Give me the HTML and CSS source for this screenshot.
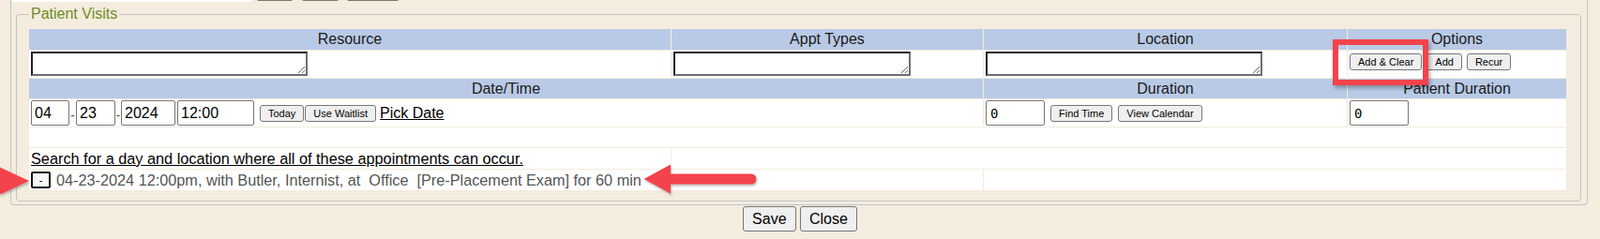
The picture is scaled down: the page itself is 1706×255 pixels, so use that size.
FILE: index.html
```html
<!DOCTYPE html>
<html lang="en">
<head>
    <meta charset="UTF-8">
    <meta name="viewport" content="width=device-width, initial-scale=1.0">
    <title>Patient Visits</title>
    <link rel="stylesheet" href="styles.css">
</head>
<body>
    <div id="outer">
        <div class="topbar">
            <input type="text" class="topsearch" />
            <button class="stub s1"></button>
            <button class="stub s2"></button>
            <button class="stub s3"></button>
        </div>
        <fieldset id="visits">
            <legend>Patient Visits</legend>
            <table class="visits">
                <colgroup>
                    <col class="c-res"><col class="c-appt"><col class="c-loc"><col class="c-opt">
                </colgroup>
                <tr class="hdr">
                    <td>Resource</td>
                    <td>Appt Types</td>
                    <td>Location</td>
                    <td>Options</td>
                </tr>
                <tr class="pick">
                    <td><textarea class="res"></textarea></td>
                    <td><textarea class="appt"></textarea></td>
                    <td><textarea class="loc"></textarea></td>
                    <td class="opts">
                        <div class="btns">
                            <button>Add &amp; Clear</button>
                            <button>Add</button>
                            <button>Recur</button>
                        </div>
                    </td>
                </tr>
                <tr class="hdr">
                    <td colspan="2">Date/Time</td>
                    <td>Duration</td>
                    <td>Patient Duration</td>
                </tr>
                <tr class="when">
                    <td colspan="2">
                        <div class="line">
                            <input type="text" class="mm" value="04" /><span class="sep">-</span><input type="text" class="dd" value="23" /><span class="sep">-</span><input type="text" class="yy" value="2024" />
                            <input type="text" class="tm" value="12:00" />
                            <button class="today">Today</button><button>Use Waitlist</button>
                            <a href="#" class="pickdate">Pick Date</a>
                        </div>
                    </td>
                    <td>
                        <div class="line gap">
                            <input type="text" class="dur" value="0" />
                            <button>Find Time</button>
                            <button>View Calendar</button>
                        </div>
                    </td>
                    <td>
                        <div class="line">
                            <input type="text" class="dur" value="0" />
                        </div>
                    </td>
                </tr>
                <tr class="blank"><td colspan="4"></td></tr>
                <tr class="search">
                    <td><a href="#">Search for a day and location where all of these appointments can occur.</a></td>
                    <td colspan="3"></td>
                </tr>
                <tr class="booked">
                    <td><button class="rm">-</button><span class="visit">04-23-2024 12:00pm, with Butler, Internist, at  Office  [Pre-Placement Exam] for 60 min</span></td>
                    <td></td>
                    <td colspan="2"></td>
                </tr>
            </table>
        </fieldset>
    </div>
    <div class="actions">
        <button>Save</button>
        <button>Close</button>
    </div>

    <!-- annotations drawn over the screenshot -->
    <div class="mark highlight"></div>
    <svg class="mark arrow-in" width="36" height="42" viewBox="0 0 36 42">
        <polygon points="-3,5 31,21 -3,37" fill="#f4434b" />
    </svg>
    <svg class="mark arrow-back" width="128" height="40" viewBox="0 0 128 40">
        <line x1="28" y1="19" x2="117" y2="19" stroke="#f4434b" stroke-width="11" stroke-linecap="round" />
        <polygon points="2.5,19 31,3.5 31,34.5" fill="#f4434b" />
    </svg>
</body>
</html>
```

FILE: styles.css
```css
body {
    margin: 0;
    position: relative;
    height: 255px;
    overflow: hidden;
    background-color: #f3ecdf;
    font-family: "Liberation Sans", Arial, sans-serif;
    font-size: 16px;
    color: #111;
}

button {
    font-family: "Liberation Sans", Arial, sans-serif;
    font-size: 11px;
    color: #000;
    height: 18px;
    padding: 0 8px;
    border: 1px solid #767676;
    border-radius: 3px;
    background-color: #efefef;
    box-sizing: border-box;
}

#outer {
    margin-left: 11px;
    width: 1682px;
    box-sizing: border-box;
    padding: 0 1px;
    border: 1px solid #c4c4c4;
    border-top: none;
    border-radius: 0 0 4px 4px;
}

.topbar {
    display: flex;
    align-items: flex-end;
    height: 2px;
    overflow: hidden;
}

    .topbar .topsearch {
        width: 255px;
        height: 20px;
        margin: 0;
        padding: 0;
        border: none;
        background-color: #fff;
    }

    .topbar .stub {
        height: 20px;
        margin-bottom: 1px;
        padding: 0;
    }

.s1 { margin-left: 5px; width: 40px; }
.s2 { margin-left: 8px; width: 41px; }
.s3 { margin-left: 7px; width: 57px; }

#visits {
    margin: 4px 5px 3px 4px;
    padding: 6px 13px 10px 12px;
    border: 1px solid #c4c4c4;
    border-radius: 4px;
    min-width: 0;
}

    #visits legend {
        margin-left: 1px;
        padding: 0 2px;
        color: #6f8d22;
        font-size: 16px;
    }

table.visits {
    border-collapse: separate;
    border-spacing: 1px;
    table-layout: fixed;
    width: 1641px;
}

.c-res { width: 684px; }
.c-appt { width: 332px; }
.c-loc { width: 387px; }
.c-opt { width: 233px; }

.visits td {
    background-color: #fff;
    padding: 0 2px;
    white-space: nowrap;
}

.visits tr.hdr td {
    height: 22px;
    background-color: #b9cae6;
    text-align: center;
    color: #1a1a1a;
}

.visits tr.pick + tr.hdr td {
    height: 21px;
}

.visits tr.pick td {
    height: 29px;
    vertical-align: top;
}

textarea {
    display: block;
    margin: 1px 0 0 0;
    height: 26px;
    box-sizing: border-box;
    padding: 0;
    border: 2px solid;
    border-color: #1f1f1f #6e6e6e #6e6e6e #1f1f1f;
    background-color: #fff;
    resize: both;
}

textarea.res { width: 295px; }
textarea.appt { width: 253px; }
textarea.loc { width: 295px; }

.opts .btns {
    display: flex;
    gap: 5px;
    padding-top: 3px;
}

.visits tr.when td {
    height: 29px;
}

.line {
    display: flex;
    align-items: center;
}

    .line.gap {
        gap: 6px;
    }

.line input {
    height: 27px;
    box-sizing: border-box;
    margin: 0;
    padding: 1px 3px;
    border: 1px solid #767676;
    border-radius: 2px;
    font-family: "Liberation Sans", Arial, sans-serif;
    font-size: 16px;
    color: #000;
}

.mm { width: 41px; }
.dd { width: 42px; }
.yy { width: 58px; }
.tm { width: 82px; margin-left: 2px !important; }

.sep {
    width: 7px;
    text-align: center;
    font-size: 12px;
    color: #333;
    padding-top: 5px;
}

    .sep + .dd + .sep {
        width: 6px;
    }

.line input.dur {
    width: 63px;
    font-family: "DejaVu Sans Mono", monospace;
    font-size: 14px;
    padding-left: 4px;
}

.today {
    margin-left: 6px;
    margin-right: 1px;
}

.pickdate {
    margin-left: 4px;
}

a {
    color: #000;
    text-decoration: underline;
}

.visits tr.blank td {
    height: 21px;
}

.visits tr.search td {
    height: 22px;
}

    .visits tr.search a {
        font-size: 16.3px;
    }

.visits tr.booked td {
    height: 22px;
}

.rm {
    width: 21px;
    height: 18px;
    padding: 0;
    border: 2px solid #111;
    border-radius: 2px;
    background-color: #f6f6f6;
    vertical-align: middle;
}

.visit {
    margin-left: 6px;
    font-size: 16.25px;
    color: #555;
    white-space: pre;
    vertical-align: middle;
}

.actions {
    margin-top: 1px;
    text-align: center;
}

    .actions button {
        font-size: 16px;
        height: 27px;
        padding: 0 9px;
    }

.mark {
    position: absolute;
}

.highlight {
    left: 1421px;
    top: 42px;
    width: 102px;
    height: 49px;
    box-sizing: border-box;
    border: 6px solid #f4434b;
    box-shadow: 2px 3px 4px rgba(0, 0, 0, 0.3);
}

.arrow-in {
    left: 0;
    top: 172px;
    filter: drop-shadow(1px 2px 1px rgba(0, 0, 0, 0.25));
}

.arrow-back {
    left: 684px;
    top: 172px;
    filter: drop-shadow(1px 2px 1px rgba(0, 0, 0, 0.25));
}
```
